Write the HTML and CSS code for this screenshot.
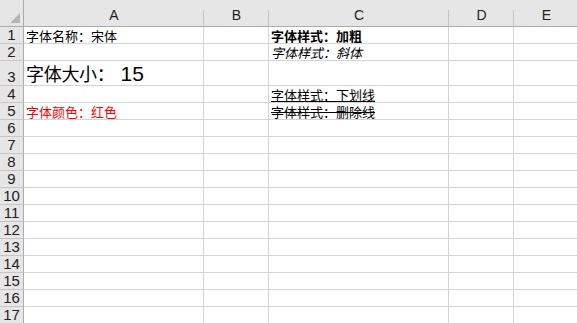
FILE: index.html
```html
<!DOCTYPE html>
<html lang="zh">
<head>
<meta charset="utf-8">
<link rel="stylesheet" href="styles.css">
</head>
<body>
<div class="sheet">
  <div class="corner"><span class="tri"></span></div>
  <div class="colh">A</div>
  <div class="colh">B</div>
  <div class="colh">C</div>
  <div class="colh">D</div>
  <div class="colh last">E</div>

  <div class="rowh">1</div>
  <div class="cell"><span>字体名称：宋体</span></div>
  <div class="cell"></div>
  <div class="cell"><span class="bold">字体样式：加粗</span></div>
  <div class="cell"></div>
  <div class="cell"></div>

  <div class="rowh">2</div>
  <div class="cell"></div>
  <div class="cell"></div>
  <div class="cell"><span class="italic">字体样式：斜体</span></div>
  <div class="cell"></div>
  <div class="cell"></div>

  <div class="rowh">3</div>
  <div class="cell big"><span>字体大小：</span><span class="num">15</span></div>
  <div class="cell"></div>
  <div class="cell"></div>
  <div class="cell"></div>
  <div class="cell"></div>

  <div class="rowh">4</div>
  <div class="cell"></div>
  <div class="cell"></div>
  <div class="cell"><span class="under">字体样式：下划线</span></div>
  <div class="cell"></div>
  <div class="cell"></div>

  <div class="rowh">5</div>
  <div class="cell"><span class="red">字体颜色：红色</span></div>
  <div class="cell"></div>
  <div class="cell"><span class="strike">字体样式：删除线</span></div>
  <div class="cell"></div>
  <div class="cell"></div>

  <div class="rowh">6</div><div class="cell"></div><div class="cell"></div><div class="cell"></div><div class="cell"></div><div class="cell"></div>
  <div class="rowh">7</div><div class="cell"></div><div class="cell"></div><div class="cell"></div><div class="cell"></div><div class="cell"></div>
  <div class="rowh">8</div><div class="cell"></div><div class="cell"></div><div class="cell"></div><div class="cell"></div><div class="cell"></div>
  <div class="rowh">9</div><div class="cell"></div><div class="cell"></div><div class="cell"></div><div class="cell"></div><div class="cell"></div>
  <div class="rowh">10</div><div class="cell"></div><div class="cell"></div><div class="cell"></div><div class="cell"></div><div class="cell"></div>
  <div class="rowh">11</div><div class="cell"></div><div class="cell"></div><div class="cell"></div><div class="cell"></div><div class="cell"></div>
  <div class="rowh">12</div><div class="cell"></div><div class="cell"></div><div class="cell"></div><div class="cell"></div><div class="cell"></div>
  <div class="rowh">13</div><div class="cell"></div><div class="cell"></div><div class="cell"></div><div class="cell"></div><div class="cell"></div>
  <div class="rowh">14</div><div class="cell"></div><div class="cell"></div><div class="cell"></div><div class="cell"></div><div class="cell"></div>
  <div class="rowh">15</div><div class="cell"></div><div class="cell"></div><div class="cell"></div><div class="cell"></div><div class="cell"></div>
  <div class="rowh">16</div><div class="cell"></div><div class="cell"></div><div class="cell"></div><div class="cell"></div><div class="cell"></div>
  <div class="rowh">17</div><div class="cell"></div><div class="cell"></div><div class="cell"></div><div class="cell"></div><div class="cell"></div>
</div>
</body>
</html>
```
FILE: styles.css
```css
html, body {
  margin: 0;
  padding: 0;
  background: #ffffff;
  overflow: hidden;
}

.sheet {
  display: grid;
  grid-template-columns: 24px 180px 65px 180px 65px 65px;
  grid-template-rows: 27px 17px 17px 25px 17px 17px repeat(12, 17px);
  font-family: "Noto Sans CJK SC", "Liberation Sans", sans-serif;
  color: #000;
}

.corner {
  position: relative;
  background: #e6e6e6;
  border-right: 1px solid #ababab;
  border-bottom: 1px solid #ababab;
  box-sizing: border-box;
}

.tri {
  position: absolute;
  right: 3px;
  bottom: 3px;
  width: 0;
  height: 0;
  border-left: 10px solid transparent;
  border-bottom: 10px solid #b5b5b5;
}

.colh {
  position: relative;
  background: #e6e6e6;
  border-bottom: 1px solid #ababab;
  box-sizing: border-box;
  font-family: "Liberation Sans", Arial, sans-serif;
  font-size: 14px;
  color: #222;
  display: flex;
  align-items: flex-end;
  justify-content: center;
  padding-bottom: 3px;
  line-height: 16px;
}

.colh::after {
  content: "";
  position: absolute;
  right: 0;
  top: 10px;
  bottom: 0;
  width: 1px;
  background: #c4c4c4;
}

.colh.last::after {
  display: none;
}

.rowh {
  background: #e6e6e6;
  border-right: 1px solid #ababab;
  border-bottom: 1px solid #c6c6c6;
  box-sizing: border-box;
  font-family: "Liberation Sans", Arial, sans-serif;
  font-size: 15px;
  color: #222;
  display: flex;
  align-items: flex-end;
  justify-content: center;
  line-height: 16px;
}

.cell {
  border-right: 1px solid #d4d4d4;
  border-bottom: 1px solid #d4d4d4;
  box-sizing: border-box;
  font-size: 13px;
  line-height: 15px;
  padding-left: 2px;
  display: flex;
  align-items: flex-end;
  white-space: nowrap;
  overflow: visible;
}

.big {
  font-size: 18px;
  line-height: 23px;
  letter-spacing: -0.3px;
}

.num {
  font-family: "Liberation Sans", Arial, sans-serif;
  font-size: 21px;
  margin-left: 6px;
  letter-spacing: 0;
}

.bold {
  font-weight: bold;
}

.italic {
  font-style: italic;
}

.under {
  text-decoration: underline;
}

.strike {
  display: inline-block;
  line-height: 15px;
  background-image: linear-gradient(#000, #000);
  background-repeat: no-repeat;
  background-position: 0 8px;
  background-size: 100% 1px;
}

.red {
  color: #ff0000;
}
```
